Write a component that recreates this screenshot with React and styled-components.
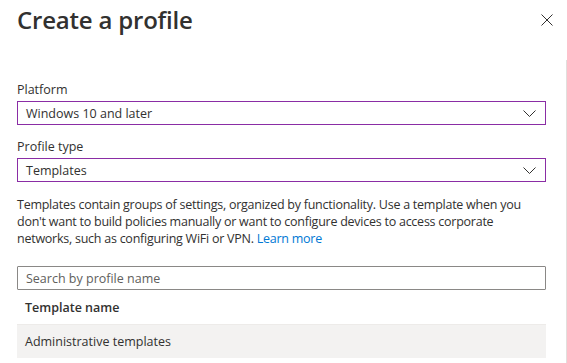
import styled, { createGlobalStyle } from 'styled-components'

const GlobalStyle = createGlobalStyle`
  html, body {
    margin: 0;
    padding: 0;
    background: #fff;
  }
  body {
    font-family: 'Open Sans', 'Noto Sans', 'Liberation Sans', sans-serif;
    color: #323130;
  }
`

const Panel = styled.div`
  width: 567px;
  height: 363px;
  overflow: hidden;
  display: flex;
  flex-direction: column;
`

const Header = styled.div`
  height: 60px;
  display: flex;
  align-items: flex-start;
  justify-content: space-between;
  padding: 0 14px 0 17px;
  box-sizing: border-box;
`

const Title = styled.h1`
  margin: 0;
  font-size: 24px;
  line-height: 40px;
  font-weight: 600;
  letter-spacing: -0.2px;
  color: #323130;
`

const CloseButton = styled.button`
  border: 0;
  background: none;
  padding: 0;
  margin-top: 14px;
  width: 12px;
  height: 12px;
  display: flex;
  cursor: pointer;
`

const Body = styled.div`
  flex: 1;
  border-right: 1px solid #e1dfdd;
  padding: 21px 20px 0 17px;
  display: flex;
  flex-direction: column;
`

const Label = styled.label`
  font-size: 12.5px;
  line-height: 18px;
  margin-bottom: 2px;
  margin-top: ${(p) => p.$top || 0}px;
`

const Select = styled.div`
  height: 24px;
  box-sizing: border-box;
  border: 1px solid #8a2da5;
  display: flex;
  align-items: center;
  justify-content: space-between;
  padding: 0 9px 0 8px;
  font-size: 12.5px;
`

const Description = styled.p`
  margin: 14px 0 0;
  font-size: 12.5px;
  line-height: 17px;
  letter-spacing: -0.25px;
`

const Link = styled.a`
  color: #0078d4;
  text-decoration: none;
`

const Search = styled.input`
  margin-top: 19px;
  height: 24px;
  box-sizing: border-box;
  border: 1px solid #8a8886;
  border-radius: 1px;
  padding: 0 8px;
  font-family: inherit;
  font-size: 12.5px;
  color: #323130;
  outline: none;
  &::placeholder {
    color: #605e5c;
  }
`

const HeaderCell = styled.div`
  height: 35px;
  display: flex;
  align-items: center;
  padding-left: 8px;
  font-size: 12.5px;
  font-weight: 600;
  border-bottom: 1px solid #edebe9;
  box-sizing: border-box;
`

const Row = styled.div`
  height: 33px;
  display: flex;
  align-items: center;
  padding-left: 8px;
  font-size: 12.5px;
  background: ${(p) => (p.$selected ? '#f3f2f1' : '#fff')};
`

const Chevron = () => (
  <svg width="13" height="7" viewBox="0 0 13 7" fill="none">
    <path d="M0.5 0.5 L6.5 6.5 L12.5 0.5" stroke="#323130" strokeWidth="1" />
  </svg>
)

const CloseIcon = () => (
  <svg width="12" height="12" viewBox="0 0 12 12" fill="none">
    <path d="M0.5 0.5 L11.5 11.5 M11.5 0.5 L0.5 11.5" stroke="#323130" strokeWidth="1" />
  </svg>
)

const App = () => {
  return (
    <Panel>
      <GlobalStyle />
      <Header>
        <Title>Create a profile</Title>
        <CloseButton aria-label="Close">
          <CloseIcon />
        </CloseButton>
      </Header>
      <Body>
        <Label>Platform</Label>
        <Select>
          <span>Windows 10 and later</span>
          <Chevron />
        </Select>
        <Label $top={13}>Profile type</Label>
        <Select>
          <span>Templates</span>
          <Chevron />
        </Select>
        <Description>
          Templates contain groups of settings, organized by functionality. Use a template when you
          don't want to build policies manually or want to configure devices to access corporate
          networks, such as configuring WiFi or VPN. <Link href="#">Learn more</Link>
        </Description>
        <Search placeholder="Search by profile name" />
        <HeaderCell>Template name</HeaderCell>
        <Row $selected>Administrative templates</Row>
      </Body>
    </Panel>
  )
}

export default App
